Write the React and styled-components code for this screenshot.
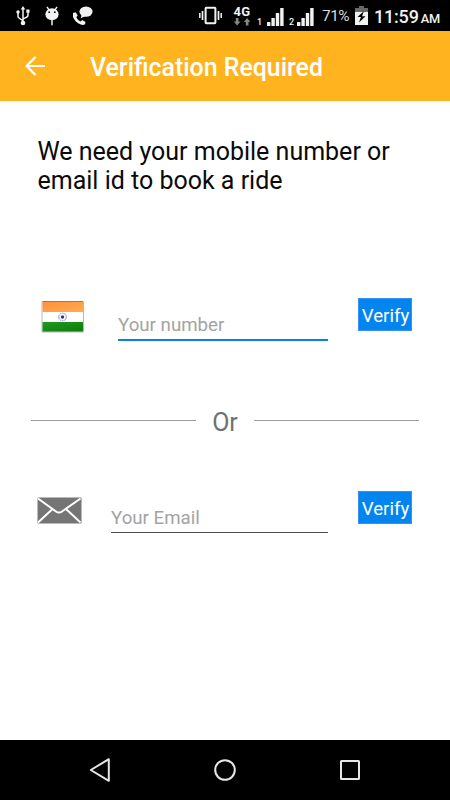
import React from 'react';
import styled, { createGlobalStyle } from 'styled-components';

const GlobalStyle = createGlobalStyle`
  * {
    box-sizing: border-box;
  }
  body {
    margin: 0;
    background-color: #fff;
    font-family: Roboto, "Liberation Sans", sans-serif;
  }
  svg {
    display: block;
    flex-shrink: 0;
  }
`;

const Screen = styled.div`
  width: 450px;
  height: 800px;
  display: flex;
  flex-direction: column;
  background-color: #fff;
  overflow: hidden;
`;

const StatusBar = styled.div`
  height: 31px;
  flex-shrink: 0;
  padding: 0 10px 0 16px;
  display: flex;
  justify-content: space-between;
  background-color: #000;
  color: #f2f2f2;
`;

const Group = styled.div`
  display: flex;
  align-items: flex-start;
  padding-top: 6px;
`;

const LeftGroup = styled(Group)`
  gap: 14px;
`;

const Network = styled.div`
  width: 18px;
  height: 20px;
  margin-left: 11px;
  display: flex;
  flex-direction: column;
  align-items: center;
  justify-content: space-between;
  font-size: 13px;
  font-weight: 700;
  line-height: 12px;
  letter-spacing: 0.4px;
`;

const SimNumber = styled.span`
  width: 7px;
  margin-left: ${(props) => props.$left}px;
  padding-top: 11px;
  font-size: 9px;
  font-weight: 500;
  line-height: 10px;
`;

const SignalBox = styled.div`
  margin-left: ${(props) => props.$left}px;
`;

const Percent = styled.span`
  width: 30px;
  margin-left: 8px;
  font-size: 15.4px;
  line-height: 20px;
  letter-spacing: -0.5px;
  color: #dcdcdc;
`;

const Clock = styled.span`
  width: 66px;
  margin-left: 6px;
  display: flex;
  align-items: baseline;
  justify-content: space-between;
  font-size: 18px;
  font-weight: 500;
  line-height: 21px;
  letter-spacing: -0.2px;
`;

const Meridiem = styled.span`
  font-size: 12.8px;
`;

const Header = styled.header`
  height: 70px;
  flex-shrink: 0;
  padding-left: 25px;
  display: flex;
  align-items: center;
  background-color: #ffb41f;
`;

const Title = styled.h1`
  margin: 4px 0 0 44px;
  font-size: 24.9px;
  font-weight: 500;
  line-height: 30px;
  color: #fff;
`;

const Content = styled.main`
  flex: 1;
  display: flex;
  flex-direction: column;
`;

const Message = styled.p`
  height: 59px;
  margin: 36px 0 0 37.5px;
  font-size: 25px;
  line-height: 29px;
  color: #0a0a0a;
  white-space: nowrap;
`;

const FieldRow = styled.div`
  height: 50px;
  margin-top: ${(props) => props.$top}px;
  padding: 0 38px 0 37px;
  display: flex;
  align-items: flex-start;
`;

const IconBox = styled.div`
  width: ${(props) => props.$width}px;
  padding: ${(props) => props.$pad};
`;

const Input = styled.input`
  flex: 1;
  min-width: 0;
  height: ${(props) => (props.$active ? 43 : 42)}px;
  padding: 13px 0 0;
  border: none;
  border-bottom: ${(props) => (props.$active ? '2px solid #0a7fe8' : '1px solid #4a4a4a')};
  border-radius: 0;
  outline: none;
  background-color: transparent;
  font-family: inherit;
  font-size: 18.7px;
  &::placeholder {
    color: #a3a3a3;
    opacity: 1;
  }
`;

const VerifyButton = styled.button`
  width: 54px;
  height: 33px;
  margin: 0 0 0 30px;
  padding: 2px 0 0 1px;
  border: 1px solid #3a90f0;
  background-color: #0385ef;
  color: #fff;
  font-family: inherit;
  font-size: 18.7px;
`;

const Divider = styled.div`
  height: 30px;
  margin-top: 57px;
  padding: 0 31px;
  display: flex;
  align-items: center;
`;

const Line = styled.div`
  flex: 1;
  height: 1px;
  background-color: #9c9c9c;
`;

const OrText = styled.span`
  width: 58px;
  padding-top: 5px;
  text-align: center;
  font-size: 25px;
  line-height: 30px;
  color: #707070;
`;

const NavBar = styled.nav`
  height: 60px;
  flex-shrink: 0;
  padding: 0 88px;
  display: flex;
  align-items: center;
  justify-content: space-between;
  background-color: #000;
`;

const UsbIcon = () => (
  <svg width="14" height="20" viewBox="0 0 14 20" fill="none" stroke="#f2f2f2" strokeWidth="1.5">
    <path d="M7 3v13M2 7v3.5c0 1.2 1 1.8 5 4.2M12 6v3c0 1.8-1 2.2-5 4" />
    <path d="M7 0l2.3 3.6H4.7z" fill="#f2f2f2" stroke="none" />
    <circle cx="7" cy="17" r="2.3" fill="#f2f2f2" stroke="none" />
    <circle cx="2" cy="6" r="1.7" fill="#f2f2f2" stroke="none" />
    <path d="M10.3 3.5h3.2v3.2h-3.2z" fill="#f2f2f2" stroke="none" />
  </svg>
);

const DroidIcon = () => (
  <svg width="15" height="20" viewBox="0 0 15 20">
    <path d="M3 .8l2 3M13 .8l-2 3M8 14v5.3" stroke="#f2f2f2" strokeWidth="1.5" />
    <ellipse cx="8" cy="8.2" rx="6.6" ry="6" fill="#f2f2f2" />
    <circle cx="5.2" cy="6.2" r="0.9" fill="#000" />
    <circle cx="10.8" cy="6.2" r="0.9" fill="#000" />
  </svg>
);

const CallIcon = () => (
  <svg width="21" height="20" viewBox="0 0 21 20" fill="#f2f2f2">
    <ellipse cx="13" cy="5.6" rx="6.6" ry="5.2" />
    <path d="M9 8l-1.3 4.3 5-2.4z" />
    <path d="M.1 7l2.6-.8 2 3.4-1.4 1.7c1 2 2.200 3.200 4.300 4.200l1.600-1.400 3.400 2-.6 2.200c-1.400 1-2.700.9-4.200.3C3.700 16.800.8 13.700-.2 10.300-.5 9.100-.5 8 .1 7z" />
  </svg>
);

const VibrateIcon = () => (
  <svg width="23" height="20" viewBox="0 0 23 20" fill="none" stroke="#f2f2f2">
    <rect x="6.6" y="1.8" width="9.8" height="15.4" rx="0.6" strokeWidth="2" />
    <path d="M3.5 5v9M19.5 5v9" strokeWidth="1.7" />
    <path d="M.8 7v5M22.2 7v5" strokeWidth="1.5" />
  </svg>
);

const DataArrows = () => (
  <svg width="16" height="8" viewBox="0 0 16 8" fill="#858585">
    <path d="M1.800 0h2.700v3.600h2L3.100 7.600-.2 3.600h2z" />
    <path d="M11.800 7.600h2.700V4h2L13.100 0 9.800 4h2z" />
  </svg>
);

const SignalIcon = () => (
  <svg width="17" height="20" viewBox="0 0 17 20" fill="#f2f2f2">
    <rect x="0" y="16" width="3.4" height="4" rx="0.5" />
    <rect x="4.4" y="12" width="3.4" height="8" rx="0.5" />
    <rect x="8.8" y="7" width="3.4" height="13" rx="0.5" />
    <rect x="13.2" y="2" width="3.4" height="18" rx="0.5" />
  </svg>
);

const BatteryIcon = () => (
  <svg width="13" height="20" viewBox="0 0 13 20">
    <path d="M4 0h5v2h4v5H0V2h4z" fill="#686868" />
    <path d="M0 6h13v13H0z" fill="#f2f2f2" />
    <path d="M9 5L2.5 11h3.4L4 16.5l6.5-6.3H7z" fill="#000" />
  </svg>
);

const BackIcon = () => (
  <svg width="21" height="20" viewBox="0 0 21 20" fill="none" stroke="#fff" strokeWidth="2.2">
    <path d="M20 10H2M10.5 1L1.6 10l8.9 9" />
  </svg>
);

const FlagIcon = () => (
  <svg width="44" height="33" viewBox="0 0 44 33">
    <defs>
      <linearGradient id="saffron" x1="0" y1="0" x2="1" y2="1">
        <stop offset="0" stopColor="#ff8f35" />
        <stop offset="1" stopColor="#ffad55" />
      </linearGradient>
      <linearGradient id="green" x1="0" y1="0" x2="1" y2="1">
        <stop offset="0" stopColor="#239723" />
        <stop offset="1" stopColor="#078007" />
      </linearGradient>
    </defs>
    <rect x="0.5" y="1" width="42.5" height="31.5" rx="1.5" fill="#b8b8b8" />
    <rect x="1.5" y="1.5" width="40.5" height="30" fill="#fff" />
    <rect x="1.5" y="1.5" width="40.5" height="10.5" fill="url(#saffron)" />
    <rect x="1.5" y="22" width="40.5" height="9.5" fill="url(#green)" />
    <path d="M1.5 1.5h40.5" stroke="#bf6f35" />
    <path d="M1.5 31.5h40.5" stroke="#6c946c" strokeWidth="0.6" />
    <circle cx="21.5" cy="17" r="3.8" fill="none" stroke="#8585c8" strokeDasharray="1.8 0.6" />
    <circle cx="21.5" cy="17" r="1.7" fill="#30309b" />
  </svg>
);

const MailIcon = () => (
  <svg width="45" height="27" viewBox="0 0 45 27">
    <rect x="0.5" y="0.5" width="44" height="26" rx="1" fill="#757575" />
    <path
      d="M1 1.5l18 13q3 2.2 6 0l18.5-13M1 25.5l14-13M43.5 25.5l-14-13"
      fill="none"
      stroke="#fff"
      strokeWidth="2"
    />
  </svg>
);

const NavBack = () => (
  <svg width="23" height="26" viewBox="0 0 23 26" fill="none" stroke="#e6e6e6" strokeWidth="2">
    <path d="M20.8 2.2v21.6L2.8 13z" strokeLinejoin="round" />
  </svg>
);

const NavHome = () => (
  <svg width="24" height="24" viewBox="0 0 24 24" fill="none" stroke="#e6e6e6" strokeWidth="2">
    <circle cx="12" cy="12" r="9.8" />
  </svg>
);

const NavRecent = () => (
  <svg width="24" height="24" viewBox="0 0 24 24" fill="none" stroke="#e6e6e6" strokeWidth="2">
    <rect x="3" y="3" width="18" height="18" rx="0.5" />
  </svg>
);

const App = () => {
  return (
    <>
      <GlobalStyle />
      <Screen>
        <StatusBar>
          <LeftGroup>
            <UsbIcon />
            <DroidIcon />
            <CallIcon />
          </LeftGroup>
          <Group>
            <VibrateIcon />
            <Network>
              4G
              <DataArrows />
            </Network>
            <SimNumber $left={6}>1</SimNumber>
            <SignalBox $left={3}>
              <SignalIcon />
            </SignalBox>
            <SimNumber $left={5}>2</SimNumber>
            <SignalBox $left={1}>
              <SignalIcon />
            </SignalBox>
            <Percent>71%</Percent>
            <SignalBox $left={3}>
              <BatteryIcon />
            </SignalBox>
            <Clock>
              11:59 <Meridiem>AM</Meridiem>
            </Clock>
          </Group>
        </StatusBar>
        <Header>
          <BackIcon />
          <Title>Verification Required</Title>
        </Header>
        <Content>
          <Message>
            We need your mobile number or
            <br />
            email id to book a ride
          </Message>
          <FieldRow $top={102}>
            <IconBox $width={81} $pad="2px 0 0 4px">
              <FlagIcon />
            </IconBox>
            <Input $active placeholder="Your number" />
            <VerifyButton>Verify</VerifyButton>
          </FieldRow>
          <Divider>
            <Line />
            <OrText>Or</OrText>
            <Line />
          </Divider>
          <FieldRow $top={56}>
            <IconBox $width={74} $pad="6px 0 0">
              <MailIcon />
            </IconBox>
            <Input placeholder="Your Email" />
            <VerifyButton>Verify</VerifyButton>
          </FieldRow>
        </Content>
        <NavBar>
          <NavBack />
          <NavHome />
          <NavRecent />
        </NavBar>
      </Screen>
    </>
  );
};

export default App;
